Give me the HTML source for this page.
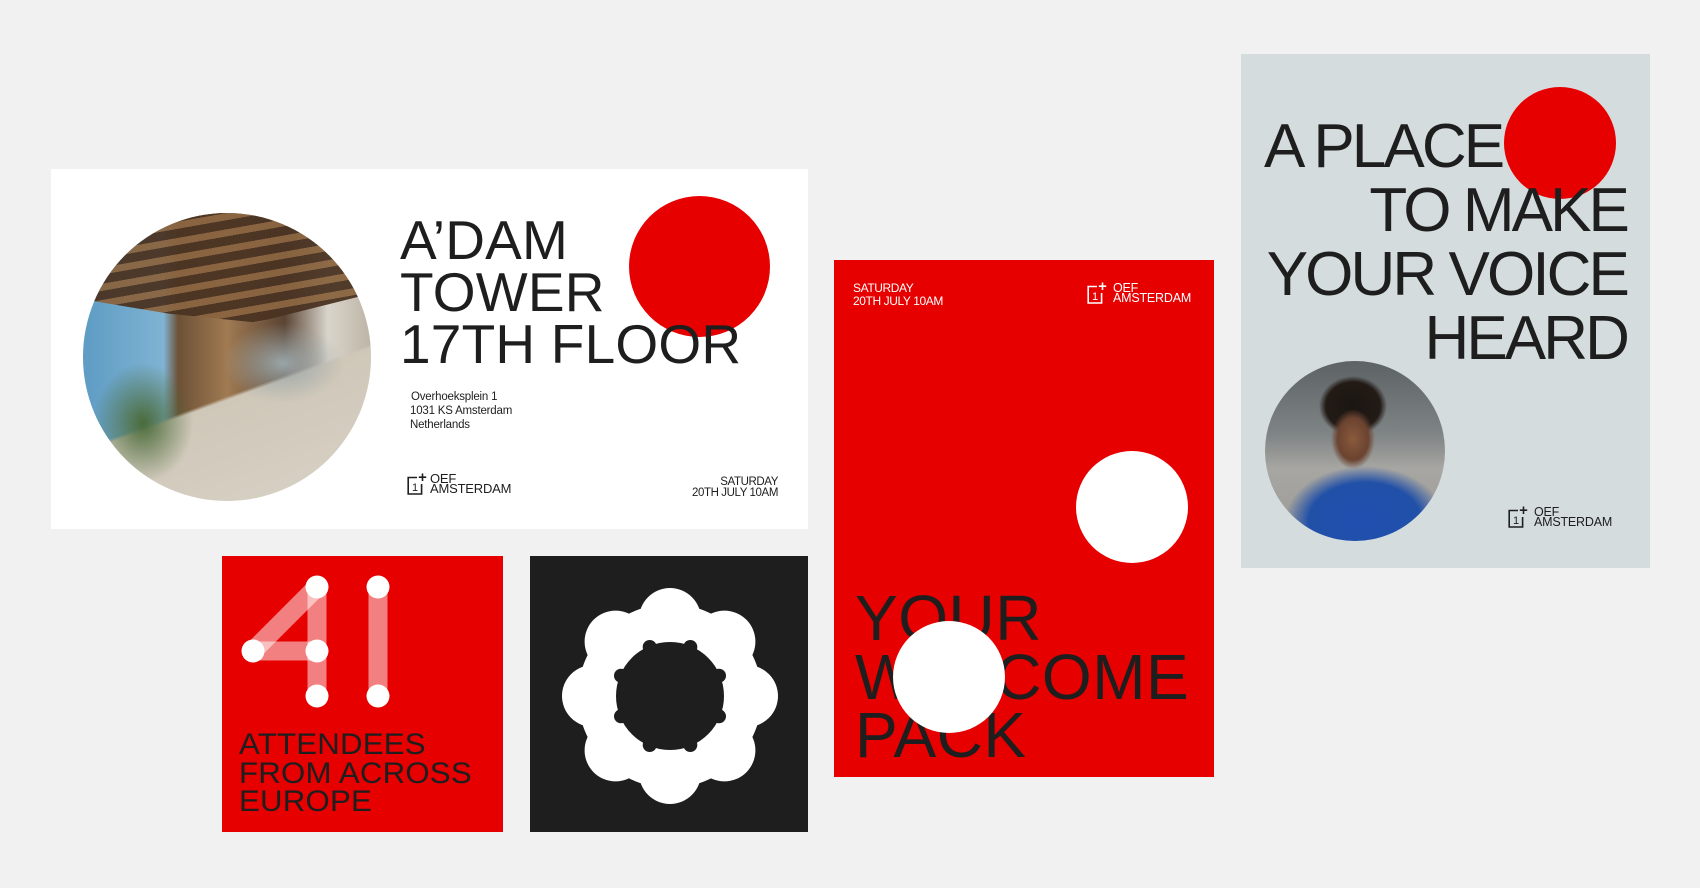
<!DOCTYPE html>
<html><head><meta charset="utf-8">
<style>
*{margin:0;padding:0;box-sizing:border-box}
body{width:1700px;height:888px;background:#f1f1f1;position:relative;overflow:hidden;font-family:"Liberation Sans",Arial,sans-serif;color:#1e1e1e}
.abs{position:absolute}
.h{font-weight:400;white-space:nowrap}
.circ{border-radius:50%}
.logo{display:flex;align-items:flex-start}
.logo .t{font-size:12.5px;line-height:10px;letter-spacing:-0.2px;margin-left:6px;margin-top:1px}
</style></head><body>

<!-- White card -->
<div class="abs" style="left:51px;top:169px;width:757px;height:360px;background:#fff"></div>
<div class="abs circ" style="left:83px;top:213px;width:288px;height:288px;overflow:hidden;
background:
radial-gradient(ellipse 60px 40px at 200px 150px,#9aa6a8 0,rgba(0,0,0,0) 100%),
radial-gradient(ellipse 50px 60px at 60px 210px,#4b6b3a 0,rgba(0,0,0,0) 100%),
linear-gradient(160deg,rgba(0,0,0,0) 60%,#cfc7b8 61%,#d8d2c6 100%),
linear-gradient(90deg,#5e9cc4 0,#7fb3d2 28%,#6d5136 33%,#a07a52 50%,#5a4434 70%,#d9d5cc 85%,#bdb4a5 100%)"></div>
<div class="abs circ" style="left:83px;top:213px;width:288px;height:288px;overflow:hidden;
background:repeating-linear-gradient(170deg,#4a3322 0 9px,#8a6440 9px 16px);
clip-path:polygon(0 0,100% 0,100% 28%,60% 38%,30% 35%,0 30%);opacity:.95"></div>

<div class="abs circ" style="left:629px;top:196px;width:141px;height:141px;background:#e60000"></div>
<div class="abs h" style="left:400px;top:214px;font-size:55px;line-height:52px;letter-spacing:0.2px">A’DAM<br>TOWER<br>17TH FLOOR</div>
<div class="abs" style="left:410px;top:390px;font-size:11.5px;line-height:14px;letter-spacing:-0.2px"><span style="margin-left:1px">Overhoeksplein 1</span><br>1031 KS Amsterdam<br>Netherlands</div>
<div class="abs logo" style="left:407px;top:473px">
<svg width="20" height="22" viewBox="0 0 20 22"><path d="M10 4.5H1.2V21H14.6V11" fill="none" stroke="#1e1e1e" stroke-width="1.6"/><path d="M15.5 0.5V8M11.8 4.2H19.2" stroke="#1e1e1e" stroke-width="1.6"/><text x="5" y="18" font-size="11" font-family="Liberation Sans" fill="#1e1e1e">1</text></svg>
<div class="t" style="font-size:13px;margin-left:3px">OEF<br>AMSTERDAM</div></div>
<div class="abs" style="right:922px;top:477px;font-size:11.5px;line-height:11px;text-align:right;letter-spacing:-0.4px">SATURDAY<br>20TH JULY 10AM</div>

<!-- 41 square -->
<div class="abs" style="left:222px;top:556px;width:281px;height:276px;background:#e60000"></div>
<svg class="abs" style="left:222px;top:556px" width="281" height="276" viewBox="222 556 281 276">
<g stroke="#fff" stroke-opacity=".5" stroke-width="19" stroke-linecap="round" fill="none">
<path d="M317 587L253 651"/><path d="M253 651H317"/><path d="M317 587V696"/><path d="M378 587V696"/></g>
<g fill="#fff"><circle cx="253" cy="651" r="11.5"/><circle cx="317" cy="587" r="11.5"/><circle cx="317" cy="651" r="11.5"/><circle cx="317" cy="696" r="11.5"/><circle cx="378" cy="587" r="11.5"/><circle cx="378" cy="696" r="11.5"/></g>
</svg>
<div class="abs h" style="left:239px;top:731px;font-size:30px;line-height:28.5px;letter-spacing:0.2px;transform:scaleX(1.04);transform-origin:left">ATTENDEES<br>FROM ACROSS<br>EUROPE</div>

<!-- Black square -->
<div class="abs" style="left:530px;top:556px;width:278px;height:276px;background:#1e1e1e"></div>
<svg class="abs" style="left:530px;top:556px" width="278" height="276" viewBox="-140 -140 278 276">
<g fill="#fff">
<circle r="92"/>
<circle cx="0" cy="-77" r="31"/><circle cx="54.4" cy="-54.4" r="31"/><circle cx="77" cy="0" r="31"/><circle cx="54.4" cy="54.4" r="31"/>
<circle cx="0" cy="77" r="31"/><circle cx="-54.4" cy="54.4" r="31"/><circle cx="-77" cy="0" r="31"/><circle cx="-54.4" cy="-54.4" r="31"/>
</g>
<g fill="#1e1e1e">
<circle r="54"/>
<circle cx="20.3" cy="-49" r="7"/><circle cx="49" cy="-20.3" r="7"/><circle cx="49" cy="20.3" r="7"/><circle cx="20.3" cy="49" r="7"/>
<circle cx="-20.3" cy="49" r="7"/><circle cx="-49" cy="20.3" r="7"/><circle cx="-49" cy="-20.3" r="7"/><circle cx="-20.3" cy="-49" r="7"/>
</g>
</svg>

<!-- Red poster -->
<div class="abs" style="left:834px;top:260px;width:380px;height:517px;background:#e60000;overflow:hidden">
<div class="abs" style="left:19px;top:22px;font-size:12px;line-height:13px;color:#fff;letter-spacing:-0.4px">SATURDAY<br>20TH JULY 10AM</div>
<div class="abs logo" style="left:253px;top:22px;color:#fff">
<svg width="20" height="22" viewBox="0 0 20 22"><path d="M10 4.5H1.2V21H14.6V11" fill="none" stroke="#fff" stroke-width="1.6"/><path d="M15.5 0.5V8M11.8 4.2H19.2" stroke="#fff" stroke-width="1.6"/><text x="5" y="18" font-size="11" font-family="Liberation Sans" fill="#fff">1</text></svg>
<div class="t" style="margin-left:6px">OEF<br>AMSTERDAM</div></div>
<div class="abs circ" style="left:242px;top:191px;width:112px;height:112px;background:#fff"></div>
<div class="abs h" style="left:21px;top:329px;font-size:64px;line-height:58.5px;letter-spacing:0.5px">YOUR<br>WELCOME<br>PACK</div>
<div class="abs circ" style="left:59px;top:361px;width:112px;height:112px;background:#fff"></div>
</div>

<!-- Grey poster -->
<div class="abs" style="left:1241px;top:54px;width:409px;height:514px;background:#d4dcdd;overflow:hidden">
<div class="abs circ" style="left:263px;top:33px;width:112px;height:112px;background:#e60000"></div>
<div class="abs h" style="left:23px;top:61px;font-size:62px;line-height:64px;letter-spacing:-2.9px;width:363px">
<div>A PLACE</div><div style="text-align:right">TO MAKE</div><div style="text-align:right">YOUR VOICE</div><div style="text-align:right">HEARD</div></div>
<div class="abs circ" style="left:24px;top:307px;width:180px;height:180px;overflow:hidden;
background:
radial-gradient(ellipse 22px 30px at 88px 78px,#8a5a3c 0,#6b4330 70%,rgba(0,0,0,0) 100%),
radial-gradient(ellipse 34px 30px at 88px 45px,#1b1613 0,#221a15 80%,rgba(0,0,0,0) 100%),
radial-gradient(ellipse 80px 55px at 100px 160px,#1f4fb0 0,#2150a8 70%,rgba(0,0,0,0) 100%),
linear-gradient(180deg,#5d6264 0,#7e8384 40%,#a7a6a2 60%,#9c9a95 100%)"></div>
<div class="abs logo" style="left:267px;top:452px">
<svg width="20" height="22" viewBox="0 0 20 22"><path d="M10 4.5H1.2V21H14.6V11" fill="none" stroke="#1e1e1e" stroke-width="1.6"/><path d="M15.5 0.5V8M11.8 4.2H19.2" stroke="#1e1e1e" stroke-width="1.6"/><text x="5" y="18" font-size="11" font-family="Liberation Sans" fill="#1e1e1e">1</text></svg>
<div class="t">OEF<br>AMSTERDAM</div></div>
</div>

</body></html>
